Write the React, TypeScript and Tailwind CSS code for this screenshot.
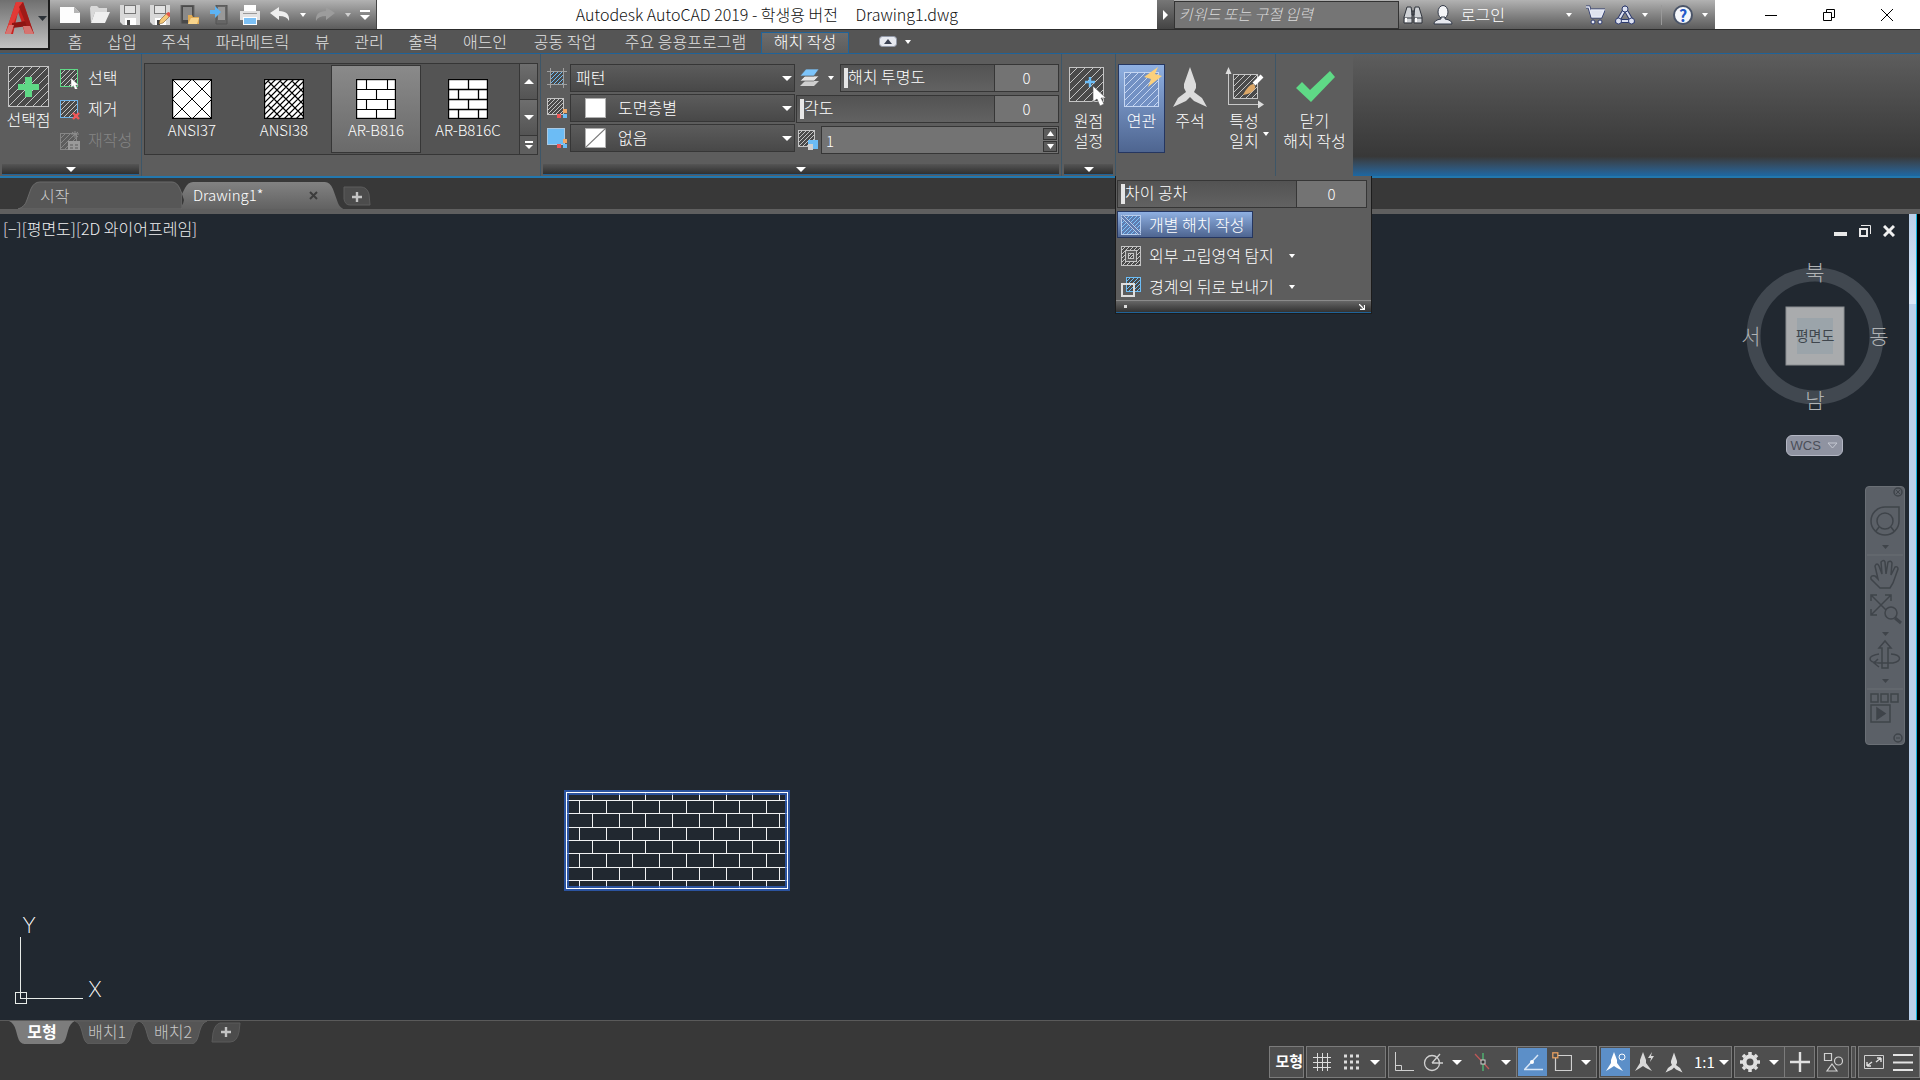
import { useState } from "react";
import type { ReactNode } from "react";
import clsx from "clsx";

const menuTabs = [
  { name: "홈", width: "w-[40px]" },
  { name: "삽입", width: "w-[54px]" },
  { name: "주석", width: "w-[54px]" },
  { name: "파라메트릭", width: "w-[99px]" },
  { name: "뷰", width: "w-[40px]" },
  { name: "관리", width: "w-[54px]" },
  { name: "출력", width: "w-[54px]" },
  { name: "애드인", width: "w-[70px]" },
  { name: "공동 작업", width: "w-[90px]" },
  { name: "주요 응용프로그램", width: "w-[151px]" },
  { name: "해치 작성", width: "w-[88px]" },
];

// Small downward triangle used by every menu button
const Caret = ({ className = "w-2 h-1 text-white" }: { className?: string }) => (
  <svg viewBox="0 0 10 5" preserveAspectRatio="none" className={clsx("shrink-0", className)} fill="currentColor">
    <path d="M0 0h10L5 5z" />
  </svg>
);

type HatchProps = {
  x?: number;
  y?: number;
  size: number;
  step: number;
  line?: string;
  border?: string;
  fill?: string;
};

// Square filled with 45 degree lines
const Hatch = ({ x = 0, y = 0, size, step, line = "#c4c4c4", border = "#c4c4c4", fill = "#4a4a4a" }: HatchProps) => {
  const lines: string[] = [];
  for (let k = step; k < size * 2; k += step) {
    const far = Math.min(k, size);
    const near = Math.max(0, k - size);
    lines.push(`M${x + near} ${y + far}L${x + far} ${y + near}`);
  }
  return (
    <g>
      <rect x={x} y={y} width={size} height={size} fill={fill} />
      <path d={lines.join("")} stroke={line} strokeWidth="1" />
      <rect x={x} y={y} width={size} height={size} fill="none" stroke={border} />
    </g>
  );
};

const Icon = ({ w = 20, h = 20, children }: { w?: number; h?: number; children: ReactNode }) => (
  <svg width={w} height={h} viewBox={`0 0 ${w} ${h}`} fill="none" className="shrink-0">
    {children}
  </svg>
);

/* ---------- Title bar ---------- */

const QuickButton = ({ label, wide, children }: { label: string; wide?: boolean; children: ReactNode }) => (
  <button aria-label={label} className={clsx("flex h-full items-center justify-center", wide ? "w-[30px]" : "w-[15px]")}>
    {children}
  </button>
);

const FloppyShape = () => (
  <>
    <path d="M0 0h20v20H3l-3-3z" fill="#d8d8d8" />
    <path d="M4 0h12v9H4z" fill="#777" />
    <path d="M5 1h10v7H5z" fill="#e4e4e4" />
    <path d="M5 13h11v7H5z" fill="#fff" />
    <path d="M7 15h3v5H7z" fill="#444" />
  </>
);

const QuickAccess = () => (
  <div className="flex h-full items-center border-r border-[#444] bg-linear-to-b from-[#b2b2b2] via-[#858585] to-[#5c5c5c] pl-[5px] pr-0.5">
    <QuickButton label="새로 만들기" wide>
      <Icon>
        <path d="M0 2h14l6 6v10H0z" fill="#fdfdfd" />
        <path d="M14 2v6h6z" fill="#b5b5b5" />
      </Icon>
    </QuickButton>
    <QuickButton label="열기" wide>
      <Icon>
        <path d="M0 3l1-2h6l2 2h8v4H5L1 18z" fill="#d9d9d9" />
        <path d="M5 7h15l-5 11H1z" fill="#f0f0f0" />
      </Icon>
    </QuickButton>
    <QuickButton label="저장" wide>
      <Icon>
        <FloppyShape />
      </Icon>
    </QuickButton>
    <QuickButton label="다른 이름으로 저장" wide>
      <Icon>
        <FloppyShape />
        <path d="M9 19l1-4 7-7 3 3-7 7z" fill="#f5c878" stroke="#7a5a30" strokeWidth="0.6" />
        <path d="M16 9l2-2q3 0 2 4l-1 1z" fill="#e2574c" />
      </Icon>
    </QuickButton>
    <QuickButton label="웹 및 모바일에서 열기" wide>
      <Icon>
        <path d="M1 0h13v19H1z" fill="#4a4a4a" stroke="#666" />
        <path d="M3 2h9v13H3z" fill="#8a8a8a" />
        <path d="M8 10h4l1 2h6v7H8z" fill="#e0ab55" />
        <path d="M11 13h8l-2 6H8z" fill="#f8d48c" />
      </Icon>
    </QuickButton>
    <QuickButton label="웹 및 모바일에 저장" wide>
      <Icon>
        <path d="M6 0h11v19H6z" fill="#666" stroke="#555" />
        <path d="M8 2h7v13H8z" fill="#999" />
        <path d="M0 5h5V1l6 6-6 6V9H0z" fill="#5db4f5" />
      </Icon>
    </QuickButton>
    <QuickButton label="플롯" wide>
      <Icon>
        <path d="M4 0h12v6H4z" fill="#fff" />
        <path d="M0 6h20v9H0z" fill="#e2e2e2" />
        <path d="M3 8h14v1H3z" fill="#999" />
        <path d="M3 12h14v8H3z" fill="#fff" />
        <path d="M4 13h12v6H4z" fill="#7cc0f5" />
      </Icon>
    </QuickButton>
    <QuickButton label="명령취소" wide>
      <Icon>
        <path d="M0 8l9-6v4q11 0 10 10-2-5-10-5v4z" fill="#efefef" />
      </Icon>
    </QuickButton>
    <QuickButton label="명령취소 목록">
      <Caret className="h-1 w-1.5 text-white" />
    </QuickButton>
    <QuickButton label="명령복구" wide>
      <Icon>
        <path d="M20 8l-9-6v4Q0 6 1 16q2-5 10-5v4z" fill="#9c9c9c" />
      </Icon>
    </QuickButton>
    <QuickButton label="명령복구 목록">
      <Caret className="h-1 w-1.5 text-[#d0d0d0]" />
    </QuickButton>
    <button aria-label="신속 접근 도구막대 사용자화" className="flex h-full w-[19px] flex-col items-center justify-center gap-[3px]">
      <span className="h-0.5 w-2.5 bg-white" />
      <Caret className="h-[5px] w-2.5 text-white" />
    </button>
  </div>
);

const InfoCenter = () => (
  <div className="flex h-full items-center bg-linear-to-b from-[#b2b2b2] via-[#858585] to-[#5c5c5c]">
    <button aria-label="검색 접기" className="flex h-full w-[17px] items-center justify-center bg-linear-to-b from-[#777] to-[#444]">
      <Icon w={5} h={10}>
        <path d="M0 0l5 5-5 5z" fill="#fff" />
      </Icon>
    </button>
    <input
      type="text"
      aria-label="검색"
      placeholder="키워드 또는 구절 입력"
      className="h-7 w-[225px] border border-[#333] bg-[#757575] px-1 pb-0.5 text-[15px] italic text-white outline-none placeholder:text-[#dcdcdc]"
    />
    <button aria-label="검색" className="flex w-7 justify-center">
      <Icon>
        <path d="M4 2h4l1 6v10H1v-6zM16 2h-4l-1 6v10h8v-6z" fill="#cfd2d6" stroke="#2e333b" />
        <path d="M9 6h2v4H9zM1 13h8M11 13h8" stroke="#2e333b" />
        <path d="M3 13v4M13 13v4" stroke="#fff" strokeWidth="2" />
      </Icon>
    </button>
    <button className="ml-[6px] flex items-center gap-2 text-[16px] leading-5 text-white">
      <Icon>
        <ellipse cx="10" cy="7" rx="5" ry="6.5" fill="#f4f5f8" stroke="#333a48" />
        <path d="M1 19q0-4 7-5v-2h4v2q7 1 7 5z" fill="#e6e8ee" stroke="#333a48" />
      </Icon>
      <span className="pb-0.5">로그인</span>
    </button>
    <button aria-label="로그인 메뉴" className="ml-[56px] flex w-4 justify-center">
      <Caret className="h-1 w-1.5 text-white" />
    </button>
    <button aria-label="앱 스토어" className="ml-2 flex w-5 justify-center">
      <Icon>
        <path d="M1 2h3l3 10h9l3-7H5" stroke="#2d3a6e" strokeWidth="3" />
        <path d="M5 5h14l-3 7H7z" fill="#dfe3ef" />
        <path d="M1 2h3l3 10h9l3-7H6" stroke="#e8ebf5" strokeWidth="1.4" />
        <circle cx="8" cy="17" r="2" fill="#e8ebf5" stroke="#2d3a6e" />
        <circle cx="15" cy="17" r="2" fill="#e8ebf5" stroke="#2d3a6e" />
      </Icon>
    </button>
    <button aria-label="연결 상태" className="ml-2.5 flex w-5 justify-center">
      <Icon>
        <path d="M10 4L3 16h14z" stroke="#2d3a6e" strokeWidth="4" />
        <path d="M10 4L3 16h14z" stroke="#dde2f2" strokeWidth="2" />
        <circle cx="10" cy="4" r="3" fill="#dde2f2" stroke="#2d3a6e" />
        <circle cx="3.5" cy="16" r="3" fill="#dde2f2" stroke="#2d3a6e" />
        <circle cx="16.5" cy="16" r="3" fill="#dde2f2" stroke="#2d3a6e" />
      </Icon>
    </button>
    <button aria-label="연결 메뉴" className="ml-0.5 flex w-4 justify-center">
      <Caret className="h-1 w-1.5 text-white" />
    </button>
    <span className="mx-2 h-5 w-px bg-[#999]" />
    <button aria-label="도움말" className="ml-[3px] flex h-5 w-5 items-center justify-center rounded-full border-2 border-[#4a5468] bg-[#f4f6fa] text-[16px] font-bold leading-4 text-[#2458c8]">
      ?
    </button>
    <button aria-label="도움말 메뉴" className="ml-1 mr-0.5 flex w-4 justify-center">
      <Caret className="h-1 w-1.5 text-white" />
    </button>
  </div>
);

const WindowButtons = () => (
  <div className="flex h-full items-center bg-white text-black">
    <button aria-label="최소화" className="flex w-[58px] justify-center">
      <Icon w={12} h={12}>
        <path d="M0 6.5h12" stroke="currentColor" />
      </Icon>
    </button>
    <button aria-label="이전 크기로" className="flex w-[58px] justify-center">
      <Icon w={12} h={12}>
        <path d="M.5 3.5h8v8h-8zM3.5 3V.5h8v8H9" stroke="currentColor" />
      </Icon>
    </button>
    <button aria-label="닫기" className="mr-1 flex w-[58px] justify-center">
      <Icon w={12} h={12}>
        <path d="M0 0l12 12M12 0L0 12" stroke="currentColor" />
      </Icon>
    </button>
  </div>
);

const Header = () => {
  const [active, setActive] = useState("해치 작성");
  return (
    <header className="flex border-b border-[#1f6399] bg-[#555]">
      <button
        aria-label="응용프로그램 메뉴"
        className="flex h-[50px] w-[50px] items-center gap-[3px] border-b-2 border-r-2 border-[#1c1c1c] bg-linear-to-b from-[#707070] to-[#c2c2c2] pb-3 pl-[5px]"
      >
        <Icon w={30} h={34}>
          <path d="M11 1h7l11 32h-9l-4-14-3-8-5 22H0z" fill="#c9211e" />
          <path d="M11 1h7l-9 20-4 12H0z" fill="#e23a36" />
          <path d="M7 22l14-2 3 5-17 2z" fill="#8e1513" />
          <path d="M18 1l11 32h-4L14 6z" fill="#9f1a18" />
          <path d="M0 33l4-9h5l-3 9zM20 33l-2-8h7l4 8z" fill="#d67470" />
        </Icon>
        <Caret className="h-[5px] w-[9px] text-[#2c3238]" />
      </button>
      <div className="flex min-w-0 flex-1 flex-col">
        <div className="flex h-[30px] items-center border-b border-[#2c2c2c] bg-white">
          <QuickAccess />
          <h1 className="flex-1 whitespace-pre pb-0.5 text-center text-[16px] leading-5 text-[#111]">
            {"Autodesk AutoCAD 2019 - 학생용 버전     Drawing1.dwg"}
          </h1>
          <InfoCenter />
          <div className="pl-[27px]">
            <WindowButtons />
          </div>
        </div>
        <nav className="flex h-[23px] items-end pl-[5px]">
          {menuTabs.map((tab) => (
            <button
              key={tab.name}
              onClick={() => setActive(tab.name)}
              className={clsx(
                "h-[21px] whitespace-nowrap border border-b-0 pb-[3px] text-[16px] leading-[17px]",
                tab.width,
                tab.name === active
                  ? "border-[#1f6399] bg-linear-to-b from-[#6c6c6c] to-[#5d5d5d] text-white"
                  : "border-transparent text-[#e2e2e2]"
              )}
            >
              {tab.name}
            </button>
          ))}
          <button aria-label="리본 최소화" className="ml-[30px] flex h-[23px] items-center gap-2">
            <Icon w={18} h={11}>
              <rect x="0.5" y="0.5" width="17" height="10" rx="3" fill="#e6e9f0" stroke="#9299a8" />
              <path d="M5 8l4-5 4 5z" fill="#3c4354" />
            </Icon>
            <Caret className="h-1 w-1.5 text-white" />
          </button>
        </nav>
      </div>
    </header>
  );
};

/* ---------- Ribbon ---------- */

const Panel = ({ className, footer, children }: { className?: string; footer?: boolean; children: ReactNode }) => (
  <section className={clsx("flex h-[122px] flex-col border-r border-[#3d5668] bg-[#5d5d5d] pt-[9px]", className)}>
    <div className="flex-1 px-0.5">{children}</div>
    {footer && (
      <button
        aria-label="패널 확장"
        className="mx-0.5 mb-px flex h-[11px] items-center justify-center border-b border-[#1f6399] bg-linear-to-b from-[#555] to-[#303030]"
      >
        <Caret className="h-[5px] w-2.5 text-white" />
      </button>
    )}
  </section>
);

const CursorShape = ({ x, y, s = 1 }: { x: number; y: number; s?: number }) => (
  <path transform={`translate(${x} ${y}) scale(${s})`} d="M0 0v16l4-3 3 7 4-2-3-6h5z" fill="#fff" stroke="#555" strokeWidth="0.6" />
);

const BoundaryPanel = () => (
  <Panel footer className="w-[142px]">
    <div className="flex">
      <button className="flex h-[70px] w-[53px] flex-col items-center pt-[3px] text-[16px] leading-5 text-white">
        <Icon w={41} h={41}>
          <Hatch x={0.5} y={0.5} size={40} step={8} />
          <path d="M17 11h7v7h7v6h-7v7h-7v-7h-7v-6h7z" fill="#5fd986" />
        </Icon>
        <span className="mt-0.5 whitespace-nowrap">선택점</span>
      </button>
      <div className="ml-[5px] flex flex-col text-[16px] leading-5">
        <button className="flex h-[31px] items-center gap-2 text-white">
          <Icon>
            <Hatch x={0.5} y={0.5} size={17} step={5} border="#5fd986" />
            <CursorShape x={11} y={9} s={0.6} />
          </Icon>
          <span className="pb-1">선택</span>
        </button>
        <button className="flex h-[31px] items-center gap-2 text-white">
          <Icon>
            <Hatch x={0.5} y={0.5} size={17} step={5} border="#6fb4ea" />
            <path d="M13 13l6 6M19 13l-6 6" stroke="#f25656" strokeWidth="2.4" />
          </Icon>
          <span className="pb-1">제거</span>
        </button>
        <button disabled className="flex h-[31px] items-center gap-2 text-[#858585]">
          <Icon>
            <Hatch x={0.5} y={2.5} size={16} step={5} line="#868686" border="#868686" fill="#5d5d5d" />
            <path d="M15 0v7M11 3h8M12 1l6 5M18 1l-6 5" stroke="#8c8c8c" />
            <path d="M8 10h12v9H8z" fill="#9a9a9a" />
            <path d="M10 14h3M15 14h3M10 17h3M15 17h3" stroke="#5d5d5d" />
          </Icon>
          <span className="pb-1">재작성</span>
        </button>
      </div>
    </div>
  </Panel>
);

const ansi37 = "M0 20L20 0M0 40L40 0M20 40L40 20M20 0l20 20M0 0l40 40M0 20l20 20";
const ansi38 =
  "M0 6L6 0M0 12L12 0M0 18L18 0M0 24L24 0M0 30L30 0M0 36L36 0M2 40L40 2M8 40L40 8M14 40l26-26M20 40l20-20M26 40l14-14M32 40l8-8M4 2l6 6M16 2l6 6M28 2l6 6M10 8l6 6M22 8l6 6M34 8l6 6M4 14l6 6M16 14l6 6M28 14l6 6M10 20l6 6M22 20l6 6M34 20l6 6M4 26l6 6M16 26l6 6M28 26l6 6M10 32l6 6M22 32l6 6M34 32l6 6";
const brick816 = "M0 10.5h40M0 20.5h40M0 30.5h40M10.5 0v10M31.5 0v10M20.5 10v10M10.5 20v10M31.5 20v10M20.5 30v10";
const brick816c = "M0 10.5h40M0 20.5h40M0 30.5h40M20.5 0v10M10.5 10v10M30.5 10v10M20.5 20v10M10.5 30v10M30.5 30v10";

const patterns = [
  { name: "ANSI37", d: ansi37, width: 1 },
  { name: "ANSI38", d: ansi38, width: 1.2 },
  { name: "AR-B816", d: brick816, width: 1.1 },
  { name: "AR-B816C", d: brick816c, width: 1.3 },
];

const PatternPanel = () => {
  const [selected, setSelected] = useState("AR-B816");
  return (
    <Panel className="w-[399px]">
      <div className="flex h-[92px] border border-[#363636] bg-[#545454]">
        <div className="flex flex-1 gap-0.5 py-px pl-0.5">
          {patterns.map((p) => (
            <button
              key={p.name}
              onClick={() => setSelected(p.name)}
              className={clsx(
                "flex w-[90px] flex-col items-center border pt-[13px] text-[15px] leading-[22px] text-white",
                selected === p.name ? "border-[#363636] bg-linear-to-b from-[#8a8a8a] to-[#6a6a6a]" : "border-transparent"
              )}
            >
              <Icon w={40} h={40}>
                <rect x="0.5" y="0.5" width="39" height="39" fill="#fff" />
                <path d={p.d} stroke="#000" strokeWidth={p.width} />
                <rect x="0.5" y="0.5" width="39" height="39" stroke="#000" strokeWidth="1.4" />
              </Icon>
              {p.name}
            </button>
          ))}
        </div>
        <div className="flex w-[18px] flex-col divide-y divide-[#363636] border-l border-[#363636] bg-[#5f5f5f]">
          <button aria-label="위로" className="flex flex-2 items-center justify-center bg-linear-to-b from-[#6e6e6e] to-[#545454]">
            <Caret className="h-[5px] w-2.5 rotate-180 text-white" />
          </button>
          <button aria-label="아래로" className="flex flex-2 items-center justify-center bg-linear-to-b from-[#6e6e6e] to-[#545454]">
            <Caret className="h-[5px] w-2.5 text-white" />
          </button>
          <button aria-label="더 보기" className="flex flex-1 flex-col items-center justify-center gap-0.5">
            <span className="h-0.5 w-2 bg-white" />
            <Caret className="h-1 w-2 text-white" />
          </button>
        </div>
      </div>
    </Panel>
  );
};

const RibbonSelect = ({ label, value, swatch }: { label: string; value: string; swatch?: "solid" | "none" }) => (
  <div className="relative w-[225px]">
    <select
      aria-label={label}
      defaultValue={value}
      className={clsx(
        "h-7 w-full appearance-none border border-[#363636] bg-linear-to-b from-[#5c5c5c] to-[#484848] pb-0.5 text-[16px] leading-5 text-white outline-none",
        swatch ? "pl-[47px]" : "pl-[5px]"
      )}
    >
      <option>{value}</option>
    </select>
    {swatch && (
      <svg width="21" height="20" viewBox="0 0 21 20" className="pointer-events-none absolute left-[15px] top-1">
        <rect x="0.5" y="0.5" width="20" height="19" fill="#fff" stroke="#b0b0b0" />
        {swatch === "none" && <path d="M0 20L21 0" stroke="#777" strokeWidth="1.2" />}
      </svg>
    )}
    <Caret className="pointer-events-none absolute right-[3px] top-[12px] h-[5px] w-2.5 text-white" />
  </div>
);

// Slider that carries its caption inside the track, with the value box at its right
const SliderField = ({ id, label, valueWidth }: { id: string; label: string; valueWidth: string }) => {
  const [value, setValue] = useState("0");
  return (
    <div className="relative flex h-7 flex-1 border border-[#363636]">
      <input
        id={id}
        type="range"
        min="0"
        max="90"
        value={Number(value) || 0}
        onChange={(e) => setValue(e.target.value)}
        className="h-full min-w-0 flex-1 appearance-none bg-linear-to-b from-[#535353] to-[#626262] pl-[3px] [&::-webkit-slider-thumb]:h-5 [&::-webkit-slider-thumb]:w-1 [&::-webkit-slider-thumb]:appearance-none [&::-webkit-slider-thumb]:bg-[#e6e6e6]"
      />
      <label htmlFor={id} className="pointer-events-none absolute left-[7px] top-px whitespace-nowrap text-[16px] leading-5 text-white">
        {label}
      </label>
      <input
        type="text"
        aria-label={`${label} 값`}
        value={value}
        onChange={(e) => setValue(e.target.value)}
        className={clsx("border-l border-[#363636] bg-[#737373] text-center text-[15px] text-white outline-none", valueWidth)}
      />
    </div>
  );
};

const ColorDots = () => (
  <>
    <path d="M16 11h4v4h-4z" fill="#f0a868" />
    <path d="M10 16h4v4h-4z" fill="#f25656" />
    <path d="M16 16h4v4h-4z" fill="#6cbcf5" />
  </>
);

const PropertiesPanel = () => (
  <Panel footer className="w-[521px]">
    <div className="flex gap-px pl-1 pt-px">
      <div className="flex flex-col gap-0.5">
        <div className="flex items-center gap-[3px]">
          <Icon>
            <Hatch x={3.5} y={3.5} size={13} step={4} line="#6cbcf5" border="#5a6a78" />
            <path d="M3.5 0v20M16.5 0v20M0 3.5h20M0 16.5h20" stroke="#a0a0a0" />
          </Icon>
          <RibbonSelect label="해치 유형" value="패턴" />
        </div>
        <div className="flex items-center gap-[3px]">
          <Icon>
            <Hatch x={0.5} y={0.5} size={16} step={4} />
            <ColorDots />
          </Icon>
          <RibbonSelect label="해치 색상" value="도면층별" swatch="solid" />
        </div>
        <div className="flex items-center gap-[3px]">
          <Icon>
            <rect x="0.5" y="0.5" width="17" height="16" fill="#6cbcf5" stroke="#a9c9e4" />
            <ColorDots />
          </Icon>
          <RibbonSelect label="배경 색상" value="없음" swatch="none" />
        </div>
      </div>
      <div className="flex flex-1 flex-col gap-[3px]">
        <div className="flex items-center">
          <button aria-label="도면층 재지정" className="flex w-[44px] items-center justify-between pl-1 pr-1.5">
            <Icon>
              <path d="M0 18l5-5h14l-5 5z" fill="#cfcfcf" />
              <path d="M0 13l5-5h14l-5 5z" fill="#e3e3e3" stroke="#5d5d5d" strokeWidth="0.7" />
              <path d="M0 8l6-7h13l-5 7z" fill="#7cc4fa" stroke="#5d5d5d" strokeWidth="0.7" />
            </Icon>
            <Caret className="h-1 w-1.5 text-white" />
          </button>
          <SliderField id="transparency" label="해치 투명도" valueWidth="w-[64px]" />
        </div>
        <div className="flex">
          <SliderField id="angle" label="각도" valueWidth="w-[64px]" />
        </div>
        <div className="flex items-center gap-[3px] pl-0.5">
          <Icon>
            <Hatch x={0.5} y={0.5} size={16} step={4} />
            <path d="M10 10h10v9H10z" fill="#6cbcf5" />
            <path d="M10 14h5v6h-5z" fill="#d0d0d0" />
          </Icon>
          <div className="flex h-7 flex-1 items-center border border-[#363636] bg-[#737373] pr-px">
            <input type="text" aria-label="해치 축척" defaultValue="1" className="h-full min-w-0 flex-1 bg-transparent px-1 text-[15px] text-white outline-none" />
            <div className="flex h-6 w-[14px] flex-col gap-px">
              <button aria-label="증가" className="flex flex-1 items-center justify-center border border-[#333] bg-[#5c5c5c]">
                <Caret className="h-[5px] w-[7px] rotate-180 text-white" />
              </button>
              <button aria-label="감소" className="flex flex-1 items-center justify-center border border-[#333] bg-[#5c5c5c]">
                <Caret className="h-[5px] w-[7px] text-white" />
              </button>
            </div>
          </div>
        </div>
      </div>
    </div>
  </Panel>
);

const LargeButton = ({ width, label, active, menu, children }: { width: string; label: string; active?: boolean; menu?: boolean; children: ReactNode }) => (
  <button
    className={clsx(
      "relative flex h-[89px] flex-col items-center border pt-px text-[16px] leading-5 text-white",
      width,
      active ? "border-[#253660] bg-linear-to-b from-[#8fb0e2] to-[#4e6590]" : "border-transparent"
    )}
  >
    {children}
    <span className="mt-0.5 whitespace-pre text-center">{label}</span>
    {menu && <Caret className="absolute bottom-[16px] right-[3px] h-1 w-1.5 text-white" />}
  </button>
);

const OriginPanel = () => (
  <Panel footer className="w-[54px]">
    <div className="pt-px">
      <LargeButton width="w-full" label={"원점\n설정"}>
        <Icon w={40} h={42}>
          <Hatch x={0.5} y={1.5} size={34} step={8} />
          <path d="M21 11v10M16 16h10" stroke="#6cbcf5" strokeWidth="2.4" />
          <CursorShape x={24} y={20} s={1} />
        </Icon>
      </LargeButton>
    </div>
  </Panel>
);

const Propeller = ({ w, h }: { w: number; h: number }) => (
  <svg width={w} height={h} viewBox="0 0 36 42" className="shrink-0">
    <path d="M18 1l6 17v4l-2 4 8 6 5 9-13-6-4-4-4 4-13 6 5-9 8-6-2-4v-4z" fill="#dcdcdc" />
  </svg>
);

const OptionsPanel = () => (
  <Panel className="w-[160px]">
    <div className="flex pt-px">
      <LargeButton width="w-[47px]" label="연관" active>
        <Icon w={40} h={42}>
          <Hatch x={2.5} y={6.5} size={34} step={7} line="#c5d6f2" border="#c5d6f2" fill="#7391c4" />
          <path d="M36 1L22 11l7 2-3 8 14-11-7-2z" fill="#fbd07c" />
        </Icon>
      </LargeButton>
      <LargeButton width="w-[50px]" label="주석">
        <Propeller w={36} h={42} />
      </LargeButton>
      <LargeButton width="w-[58px]" label={"특성\n일치"} menu>
        <Icon w={40} h={42}>
          <path d="M4.500 39V5" stroke="#c8c8c8" />
          <path d="M4 38.500h32" stroke="#c8c8c8" />
          <path d="M4.500 1l3 7h-6zM40 38.500l-6-4v8z" fill="#dcdcdc" />
          <Hatch x={9.5} y={8.5} size={24} step={6} />
          <path d="M30 18l8-8" stroke="#fff" strokeWidth="4" />
          <path d="M19 29q5-10 10-11 4 2 1 6-3 4-11 5z" fill="#dda868" />
        </Icon>
      </LargeButton>
    </div>
  </Panel>
);

const ClosePanel = () => (
  <Panel className="w-[77px] border-r-0">
    <div className="pt-px">
      <LargeButton width="w-full" label={"닫기\n해치 작성"}>
        <Icon w={40} h={42}>
          <path d="M1 22l6-6 8 8L35 5l5 6-24 25z" fill="#5fd986" />
        </Icon>
      </LargeButton>
    </div>
  </Panel>
);

const OptionsFlyout = () => (
  <div className="absolute left-[1115px] top-[122px] z-10 w-[257px] border border-t-0 border-[#1c1c1c] bg-[#5d5d5d] pt-1 text-[16px] leading-5 text-white">
    <div className="flex pl-px pr-1">
      <SliderField id="gap" label="차이 공차" valueWidth="w-[70px]" />
    </div>
    <div className="flex flex-col items-start gap-1 pl-px pt-[3px]">
      <button className="flex h-[27px] items-center gap-2 border border-[#253660] bg-linear-to-b from-[#8fb0e2] to-[#4e6590] pl-[3px] pr-2">
        <Icon>
          <Hatch x={0.5} y={0.5} size={19} step={4} line="#7cc4fa" border="#b9cdec" fill="#5f7cb0" />
          <path d="M1 1l18 18" stroke="#5f7cb0" strokeWidth="4" />
          <path d="M0 2l18 18M2 0l18 18" stroke="#d5e2f6" strokeWidth="0.8" />
        </Icon>
        <span className="pb-0.5">개별 해치 작성</span>
      </button>
      <button className="flex h-[27px] items-center gap-2 pl-1">
        <Icon>
          <Hatch x={0.5} y={0.5} size={19} step={4} />
          <rect x="4.500" y="4.500" width="11" height="11" fill="#5d5d5d" stroke="#c4c4c4" />
          <Hatch x={7.5} y={7.5} size={5} step={3} />
        </Icon>
        <span className="pb-0.5">외부 고립영역 탐지</span>
        <Caret className="ml-[7px] h-1 w-1.5 text-white" />
      </button>
      <button className="flex h-[27px] items-center gap-2 pl-1">
        <Icon>
          <Hatch x={5.5} y={0.5} size={14} step={4} line="#6cbcf5" border="#6cbcf5" />
          <rect x="1" y="7" width="12" height="12" stroke="#dedede" strokeWidth="2" />
        </Icon>
        <span className="pb-0.5">경계의 뒤로 보내기</span>
        <Caret className="ml-[7px] h-1 w-1.5 text-white" />
      </button>
    </div>
    <div className="flex h-[13px] items-center justify-between border-b border-t border-b-[#1f6399] border-t-[#8a8a8a] bg-linear-to-b from-[#666] to-[#333] pl-2 pr-1.5">
      <span className="h-[3px] w-[3px] bg-[#ddd]" />
      <button aria-label="해치 설정">
        <Icon w={6} h={6}>
          <path d="M0 0l5 5M5.500 1v4.500H1" stroke="#fff" strokeWidth="1.300" />
        </Icon>
      </button>
    </div>
  </div>
);

const Ribbon = () => (
  <div className="relative flex border-b-2 border-[#2377ad] bg-linear-to-b from-[#5d5d5d] via-[#383838] via-84% to-[#1b68a3]">
    <BoundaryPanel />
    <PatternPanel />
    <PropertiesPanel />
    <OriginPanel />
    <OptionsPanel />
    <ClosePanel />
    <OptionsFlyout />
  </div>
);

/* ---------- Drawing area ---------- */

const FileTabs = () => (
  <div className="flex h-[36px] items-end border-b-[5px] border-[#5f5f5f] bg-[#383838] pl-[18px] text-[16px] leading-5">
    <button className="relative h-7 w-[164px] pl-[22px] text-left text-[#d0d0d0]">
      <svg viewBox="0 0 165 28" preserveAspectRatio="none" className="absolute inset-0 h-full w-full">
        <path d="M0 28q7-2 9-9l4-11q3-7 9-7h133q5 0 8 7l2 5v15z" fill="#575757" stroke="#6b6b6b" />
      </svg>
      <span className="relative">시작</span>
    </button>
    <div className="relative flex h-7 w-[161px] items-center pl-[11px] text-white">
      <svg viewBox="0 0 160 28" preserveAspectRatio="none" className="absolute inset-0 h-full w-full">
        <defs>
          <linearGradient id="tab" x1="0" y1="0" x2="0" y2="1">
            <stop offset="0" stopColor="#828282" />
            <stop offset="1" stopColor="#626262" />
          </linearGradient>
        </defs>
        <path d="M-6 28q7-2 8-9l-2-6 3-6q3-6 8-6h131q5 0 8 7l5 14q2 5 6 6z" fill="url(#tab)" />
      </svg>
      <button className="relative text-[15px]">Drawing1*</button>
      <button aria-label="탭 닫기" className="relative ml-[46px]">
        <Icon w={9} h={9}>
          <path d="M1 1l7 7M8 1L1 8" stroke="#3c3c3c" strokeWidth="2" />
        </Icon>
      </button>
    </div>
    <button aria-label="새 탭" className="mb-[3px]">
      <Icon w={28} h={20}>
        <path d="M1 1h17q6 0 8 7l1 11H7q-5 0-6-6z" fill="#4c4c4c" stroke="#5c5c5c" />
        <path d="M14 6v10M9 11h10" stroke="#c4c4c4" strokeWidth="2.400" />
      </Icon>
    </button>
  </div>
);

const ViewCube = () => (
  <div className="absolute right-[19px] top-[36px] flex w-[156px] flex-col items-center gap-[17px]">
    <svg width="156" height="168" viewBox="0 -10 156 168" className="font-[Noto_Sans_CJK_KR]">
      <circle cx="81" cy="76" r="61.500" fill="none" stroke="#414850" strokeWidth="14" />
      <rect x="52" y="47" width="58" height="58" fill="#a9abad" stroke="#8b8e91" />
      <rect x="63" y="58" width="36" height="36" fill="#9ba4aa" />
      <text x="81" y="81" textAnchor="middle" fontSize="14" fontWeight="400" fill="#3f464d">
        평면도
      </text>
      <g fontSize="21" textAnchor="middle" fill="#b0b3b5">
        <text x="81" y="20">북</text>
        <text x="81" y="148">남</text>
        <text x="17" y="84">서</text>
        <text x="145" y="84">동</text>
      </g>
    </svg>
    <button className="ml-1 flex h-[21px] w-[57px] items-center justify-between rounded-md border border-[#b4b7c4] bg-[#8f93a1] pl-1 pr-1 font-[Liberation_Sans] text-[13px] leading-4 text-[#4a4e58]">
      WCS
      <Icon w={11} h={7}>
        <path d="M1 1h9L5.500 6z" stroke="#c5c8d2" />
      </Icon>
    </button>
  </div>
);

const NavigationBar = () => (
  <div className="absolute right-1 top-[272px] h-[259px] w-[40px] rounded border border-[#6a6f75] bg-[#5b6067]">
    <svg width="38" height="257" viewBox="0 0 38 257" fill="none" stroke="#3f444a" strokeWidth="1.500">
      <circle cx="32" cy="5" r="4" />
      <path d="M30 3l4 4M34 3l-4 4" strokeWidth="1" />
      <path d="M19 20h14v14a14 14 0 1 1-14-14z" />
      <circle cx="19" cy="34" r="8" />
      <path d="M13 40l-3 4M25 40l3 4" />
      <path d="M16 58h7l-3.500 4z" fill="#3f444a" stroke="none" />
      <path d="M1 68h36" stroke="#6a6f75" strokeWidth="1" />
      <path d="M14 101l-9-9q-1-4 4-3l3 3-3-13q2-4 4 0l3 8-1-12q3-3 4 0l1 12 2-12q3-2 4 1l-1 12 4-8q3-1 3 2l-5 14-3 5z" />
      <path d="M5 108l20 20M25 108L5 128M5 114v-6h6M19 108h6v6M5 122v6h6" />
      <circle cx="25" cy="126" r="6" fill="#5b6067" />
      <path d="M29 131l6 5" strokeWidth="3" />
      <path d="M16 145h7l-3.500 4z" fill="#3f444a" stroke="none" />
      <path d="M16 181v-20h-3l6-7 6 7h-3v20z" />
      <path d="M13 167c-12 2-12 8 0 9h14c9-2 9-8-2-9M12 172l-4 4 5 4" />
      <path d="M16 192h7l-3.500 4z" fill="#3f444a" stroke="none" />
      <path d="M1 202h36" stroke="#6a6f75" strokeWidth="1" />
      <path d="M5 207h7v8H5zM15 207h7v8h-7zM25 207h7v8h-7zM5 218h19v17H5z" />
      <path d="M11 221l8 5.500-8 5.500z" fill="#3f444a" />
      <circle cx="32" cy="251" r="4" />
      <path d="M30 251h4" strokeWidth="1" />
    </svg>
  </div>
);

const rowLines = [8, 21, 35, 48, 61, 75, 88];

// Brick hatch inside the selected rectangle
const BrickHatch = () => {
  const edges = [0, ...rowLines, 96];
  const joints: string[] = [];
  for (let row = 0; row < edges.length - 1; row++) {
    const start = row % 2 === 0 ? 26 : 13;
    for (let i = 0; i < 8; i++) {
      const x = Math.round(start + i * 26.7);
      if (x < 220) joints.push(`M${x}.5 ${edges[row]}V${edges[row + 1] + 1}`);
    }
  }
  return (
    <svg width="230" height="104" viewBox="-4 -4 230 104" fill="none" className="absolute bottom-[128px] left-[562px]">
      <path d={rowLines.map((y) => `M0 ${y}.5H221`).join("") + joints.join("")} stroke="#f0f1f2" />
      <rect x="0.5" y="0.5" width="221" height="96" stroke="#2f62c4" strokeWidth="5" strokeOpacity="0.75" />
      <rect x="0.5" y="0.5" width="221" height="96" stroke="#fff" />
    </svg>
  );
};

const DrawingArea = () => (
  <main className="flex min-h-0 flex-1 bg-black">
    <div className="relative flex-1 overflow-hidden bg-[#212830]">
      <div className="flex items-start justify-between px-[3px] pt-1 text-[16px] leading-5 text-[#f0f0f0]">
        <div className="flex">
          <button>[−]</button>
          <button>[평면도]</button>
          <button>[2D 와이어프레임]</button>
        </div>
        <div className="flex items-center gap-[12px] pr-[11px] pt-[7px]">
          <button aria-label="뷰포트 최소화" className="flex h-3 items-end pb-px">
            <span className="h-1 w-[13px] bg-[#e8e8e8]" />
          </button>
          <button aria-label="뷰포트 복원">
            <Icon w={12} h={12}>
              <path d="M1 4h7v7H1z" stroke="#e8e8e8" strokeWidth="2" />
              <path d="M2 .5h9.500V9" stroke="#e8e8e8" />
            </Icon>
          </button>
          <button aria-label="뷰포트 닫기">
            <Icon w={12} h={12}>
              <path d="M1 1l10 10M11 1L1 11" stroke="#f0f0f0" strokeWidth="3" />
            </Icon>
          </button>
        </div>
      </div>
      <ViewCube />
      <NavigationBar />
      <BrickHatch />
      <svg width="110" height="100" viewBox="0 0 110 100" fill="none" className="absolute bottom-[10px] left-0 font-[Inter] font-extralight">
        <path d="M20.500 27v62M20 88.500h63" stroke="#e8ece8" />
        <rect x="15.500" y="82.500" width="11" height="11" stroke="#e8ece8" />
        <text x="29" y="23" textAnchor="middle" fontSize="21" fill="#fff">Y</text>
        <text x="95" y="87" textAnchor="middle" fontSize="21" fill="#fff">X</text>
      </svg>
    </div>
    <div className="w-[7px] bg-[#bad0ea]">
      <div className="h-[90px] bg-linear-to-b from-[#bad0ea] to-[#dbe7f6]" />
    </div>
    <div className="mr-[3px] w-px bg-[#10b4dc]" />
  </main>
);

const LayoutTab = ({ label, active, width }: { label: string; active?: boolean; width: string }) => (
  <button className={clsx("relative h-[23px] pb-1", width, active ? "font-bold text-white" : "text-[#c8c8c8]")}>
    <svg viewBox="0 0 68 23" preserveAspectRatio="none" className="absolute inset-0 h-full w-full">
      <path d="M0 0h68q-5 2-7 9l-2 7q-2 7-7 7H16q-5 0-7-7L7 9Q5 2 0 0z" fill={active ? "#7c7c7c" : "#555"} stroke={active ? "none" : "#606060"} />
    </svg>
    <span className="relative">{label}</span>
  </button>
);

const LayoutTabs = () => (
  <div className="flex h-[25px] items-start border-t border-[#5a5a5a] bg-[#383838] pl-[9px] text-[16px] leading-5">
    <LayoutTab label="모형" active width="w-[66px]" />
    <LayoutTab label="배치1" width="w-[64px]" />
    <LayoutTab label="배치2" width="w-[68px]" />
    <button aria-label="새 배치" className="ml-1 mt-px">
      <Icon w={30} h={21}>
        <path d="M9 1h20l-1 9q-2 10-9 10H1l1-9q2-9 7-10z" fill="#4c4c4c" stroke="#5a5a5a" />
        <path d="M15 5v10M10 10h10" stroke="#c4c4c4" strokeWidth="2.400" />
      </Icon>
    </button>
  </div>
);

/* ---------- Status bar ---------- */

const StatusGroup = ({ className, children }: { className?: string; children?: ReactNode }) => (
  <div className={clsx("flex items-center border border-[#7b7b7b] bg-[#4e4e4e]", className)}>{children}</div>
);

const StatusButton = ({ label, active, menu, children }: { label: string; active?: boolean; menu?: boolean; children?: ReactNode }) => (
  <button
    aria-label={label}
    aria-pressed={active}
    className={clsx("flex h-7 shrink-0 items-center justify-center", menu ? "w-5" : "w-[29px]", active && "bg-[#5c8fc8]")}
  >
    {menu ? <Caret className="h-[5px] w-2.5 text-white" /> : children}
  </button>
);

const StatusBar = () => (
  <footer className="flex h-[35px] justify-end gap-0.5 bg-[#383838] pb-0.5 pt-px">
    <StatusGroup className="w-[35px] justify-end">
      <button className="whitespace-nowrap pb-0.5 text-[15px] font-bold leading-5 text-white">모형</button>
    </StatusGroup>
    <StatusGroup className="w-[80px]">
      <StatusButton label="그리드">
        <Icon>
          <path d="M5.500 1v18M10.500 1v18M15.500 1v18M1 5.500h18M1 10.500h18M1 15.500h18" stroke="#dcdcdc" />
        </Icon>
      </StatusButton>
      <StatusButton label="스냅">
        <Icon>
          <path d="M3 4h15M3 10h15M3 16h15" stroke="#dcdcdc" strokeWidth="3" strokeDasharray="3 3" />
        </Icon>
      </StatusButton>
      <StatusButton label="스냅 메뉴" menu />
    </StatusGroup>
    <StatusGroup className="w-[209px]">
      <StatusButton label="직교">
        <Icon>
          <path d="M1.500 0v18.500H20" stroke="#d0d0d0" />
          <path d="M2 13.500h5.500v5" stroke="#d0d0d0" />
        </Icon>
      </StatusButton>
      <StatusButton label="극좌표 추적">
        <Icon>
          <circle cx="9" cy="11" r="7.500" stroke="#d0d0d0" strokeWidth="1.300" />
          <path d="M9 11h11M9 11l8-9" stroke="#d0d0d0" strokeWidth="1.300" />
        </Icon>
      </StatusButton>
      <StatusButton label="극좌표 메뉴" menu />
      <StatusButton label="등각투영">
        <Icon>
          <path d="M3 2l14 15" stroke="#c05858" strokeWidth="1.200" />
          <path d="M11 1v18" stroke="#4fc878" strokeWidth="1.200" />
          <rect x="9" y="8" width="4" height="4" fill="#333" stroke="#d0d0d0" />
        </Icon>
      </StatusButton>
      <StatusButton label="등각투영 메뉴" menu />
      <span className="mr-px h-full w-px bg-[#7b7b7b]" />
      <StatusButton label="객체 스냅 추적" active>
        <Icon>
          <path d="M2 17L15 3M1 17.500h19" stroke="#d8e6f6" strokeWidth="1.500" />
          <circle cx="9" cy="10" r="2" fill="#fff" />
        </Icon>
      </StatusButton>
      <StatusButton label="객체 스냅">
        <Icon>
          <path d="M3.500 3.500h16v15h-16z" stroke="#d0d0d0" strokeWidth="1.200" />
          <rect x="0.800" y="0.800" width="5" height="5" fill="#4e4e4e" stroke="#e8a060" strokeWidth="1.300" />
        </Icon>
      </StatusButton>
      <StatusButton label="객체 스냅 메뉴" menu />
    </StatusGroup>
    <StatusGroup className="w-[133px] pl-px">
      <StatusButton label="주석 가시성" active>
        <Icon>
          <path d="M8 0l3 8v3l6 8-6-3-3-2-3 2-5 3 5-8V8z" fill="#fff" />
          <circle cx="16" cy="5" r="3" stroke="#fff" />
        </Icon>
      </StatusButton>
      <StatusButton label="주석 자동 축척">
        <Icon>
          <path d="M8 0l3 8v3l6 8-6-3-3-2-3 2-5 3 5-8V8z" fill="#d8d8d8" />
          <path d="M17 0l-4 6h3l-1 4 4-6h-3z" fill="#d8d8d8" />
        </Icon>
      </StatusButton>
      <StatusButton label="주석 축척">
        <Propeller w={18} h={21} />
      </StatusButton>
      <button className="flex items-center gap-1 pl-[6px] text-[15px] font-normal leading-5 text-white">
        1:1
        <Caret className="h-[5px] w-2.5 text-white" />
      </button>
    </StatusGroup>
    <StatusGroup className="w-[81px]">
      <StatusButton label="작업공간">
        <Icon>
          <circle cx="10" cy="10" r="5.500" stroke="#e0e0e0" strokeWidth="4" />
          <path d="M10 0v3M10 17v3M0 10h3M17 10h3M3 3l2 2M15 15l2 2M17 3l-2 2M5 15l-2 2" stroke="#e0e0e0" strokeWidth="3.500" />
        </Icon>
      </StatusButton>
      <StatusButton label="작업공간 메뉴" menu />
      <span className="h-full w-px bg-[#7b7b7b]" />
      <StatusButton label="주석 감시">
        <Icon>
          <path d="M10 0v20M0 10h20" stroke="#e0e0e0" strokeWidth="2.400" />
        </Icon>
      </StatusButton>
    </StatusGroup>
    <StatusGroup className="w-[32px] justify-center">
      <StatusButton label="객체 분리">
        <Icon>
          <path d="M1.500 1.500h7v7h-7zM9 12l5 7H4z" stroke="#d0d0d0" strokeWidth="1.200" />
          <circle cx="15.500" cy="9" r="4" stroke="#d0d0d0" strokeWidth="1.200" />
        </Icon>
      </StatusButton>
    </StatusGroup>
    <StatusGroup className="w-[5px]" />
    <StatusGroup className="w-[62px]">
      <StatusButton label="화면 정리">
        <Icon>
          <path d="M.5 3.500h19v13H.5z" stroke="#d0d0d0" />
          <path d="M17 6l-5 4M17 6h-4M17 6v4M3 14l5-4M3 14h4M3 14v-4" stroke="#e0e0e0" strokeWidth="1.400" />
        </Icon>
      </StatusButton>
      <StatusButton label="사용자화">
        <Icon>
          <path d="M0 3h20M0 10.500h20M0 18h20" stroke="#e4e4e4" strokeWidth="2" />
        </Icon>
      </StatusButton>
    </StatusGroup>
  </footer>
);

const App = () => (
  <div className="flex h-screen flex-col overflow-hidden bg-[#383838] font-['Noto_Sans_CJK_KR',sans-serif] font-light">
    <Header />
    <Ribbon />
    <FileTabs />
    <DrawingArea />
    <LayoutTabs />
    <StatusBar />
  </div>
);

export default App;
